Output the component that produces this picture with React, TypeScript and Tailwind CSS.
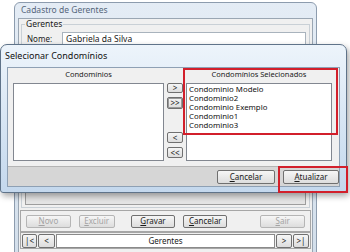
import React from "react";

const Btn = ({
  children,
  className = "",
  disabled = false,
}: {
  children: React.ReactNode;
  className?: string;
  disabled?: boolean;
}) => (
  <div
    className={`flex items-center justify-center rounded-[2px] border bg-gradient-to-b from-[#f6f6f6] to-[#dddddd] text-[8px] leading-none ${
      disabled ? "border-[#b5b5b5] text-[#a3a3a3]" : "border-[#707070] text-[#1a1a1a]"
    } ${className}`}
  >
    {children}
  </div>
);

const Mn = ({ k, rest }: { k: string; rest: string }) => (
  <span>
    <span className="underline underline-offset-1">{k}</span>
    {rest}
  </span>
);

const selecionados = [
  "Condominio Modelo",
  "Condominio2",
  "Condominio Exemplo",
  "Condominio1",
  "Condominio3",
];

export default function App() {
  return (
    <div className="relative h-[252px] w-[350px] overflow-hidden bg-white font-['Noto_Sans',sans-serif]">
      {/* Janela de fundo: Cadastro de Gerentes */}
      <div className="absolute left-[14px] top-[2px] flex h-[252px] w-[303px] flex-col rounded-t-[6px] border border-[#8d9cae] bg-gradient-to-b from-[#e4ecf5] to-[#d3dfeb] px-[3px]">
        <div className="flex h-[15px] items-center pl-[3px] text-[8.5px] text-[#55657a]">
          Cadastro de Gerentes
        </div>
        <div className="flex flex-1 flex-col border border-[#9aa6b3] bg-[#f0f0f0] px-[1px] pb-[3px]">
          <fieldset className="mx-[1px] flex flex-1 flex-col border border-[#c9d0d6] px-[3px] pb-[2px]">
            <legend className="px-[1px] text-[8.5px] leading-[10px] text-[#1a1a1a]">Gerentes</legend>
            <div className="mt-[3px] flex items-center">
              <span className="w-[37px] pl-[2px] text-[8px] text-[#1a1a1a]">Nome:</span>
              <div className="flex h-[14px] flex-1 items-center border border-[#a9b3bd] bg-white pl-[3px] text-[8.5px] text-[#1a1a1a]">
                Gabriela da Silva
              </div>
            </div>
            <div className="flex-1" />
            <div className="h-[13px] border border-[#9d9d9d] bg-[#e4e4e4]" />
          </fieldset>
          <div className="mt-[2px] flex h-[22px] items-center border border-[#a6a6a6] px-[5px]">
            <Btn disabled className="h-[13px] w-[45px]">
              <Mn k="N" rest="ovo" />
            </Btn>
            <Btn disabled className="ml-[8px] h-[13px] w-[36px]">
              <Mn k="E" rest="xcluir" />
            </Btn>
            <Btn className="ml-[16px] h-[13px] w-[45px]">
              <Mn k="G" rest="ravar" />
            </Btn>
            <Btn className="ml-[8px] h-[13px] w-[44px]">
              <Mn k="C" rest="ancelar" />
            </Btn>
            <Btn disabled className="ml-[33px] h-[13px] w-[45px]">
              <Mn k="S" rest="air" />
            </Btn>
          </div>
          <div className="flex h-[17px] items-center gap-[1px] border border-[#a6a6a6] px-[1px]">
            <Btn className="h-[14px] w-[15px]">|&lt;</Btn>
            <Btn className="h-[14px] w-[17px]">&lt;</Btn>
            <div className="flex h-[14px] flex-1 items-center justify-center border border-[#8a8a8a] bg-white text-[8px] text-[#1a1a1a]">
              Gerentes
            </div>
            <Btn className="h-[14px] w-[16px]">&gt;</Btn>
            <Btn className="h-[14px] w-[16px]">&gt;|</Btn>
          </div>
        </div>
      </div>

      {/* Diálogo: Selecionar Condomínios */}
      <div className="absolute left-0 top-[44px] flex h-[149px] w-[347px] flex-col rounded-t-[7px] rounded-b-[3px] border border-[#5f7389] bg-gradient-to-b from-[#edf4fb] via-[#d8e6f4] to-[#c4d8ed] px-[6px] pb-[5px] shadow-[2px_3px_6px_rgba(0,0,0,0.35)]">
        <div className="-ml-[2px] flex h-[22px] items-center text-[9px] text-[#111]">
          Selecionar Condomínios
        </div>
        <div className="flex flex-1 flex-col border border-[#8ea0b4] bg-[#f0f0f0]">
          <div className="flex flex-1 px-[5px] pt-[1px]">
            <div className="flex w-[151px] flex-col">
              <div className="flex h-[12px] items-center justify-center text-[7.5px] text-[#1a1a1a]">
                Condomínios
              </div>
              <div className="mt-[2px] flex-1 border border-[#828790] bg-white" />
            </div>
            <div className="flex w-[22px] flex-col items-center pt-[14px]">
              <Btn className="h-[10px] w-[16px]">&gt;</Btn>
              <Btn className="mt-[4px] h-[12px] w-[16px] border-[#3c3c3c] shadow-[inset_0_0_0_1px_#9a9a9a]">
                &gt;&gt;
              </Btn>
              <Btn className="mt-[23px] h-[11px] w-[16px]">&lt;</Btn>
              <Btn className="mt-[4px] h-[11px] w-[16px]">&lt;&lt;</Btn>
            </div>
            <div className="flex flex-1 flex-col pr-[2px]">
              <div className="flex h-[12px] items-center justify-center text-[7.5px] text-[#1a1a1a]">
                Condomínios Selecionados
              </div>
              <div className="mt-[2px] flex flex-1 flex-col border border-[#828790] bg-white pl-[2px] pt-[1px] text-[7.8px] leading-[9px] text-[#111]">
                {selecionados.map((c) => (
                  <div key={c} className="h-[9px]">
                    {c}
                  </div>
                ))}
              </div>
            </div>
          </div>
          <div className="mt-[5px] flex h-[20px] items-center justify-end gap-[8px] border-t border-[#b4b4b4] bg-[#d6d6d6]">
            <Btn className="h-[14px] w-[58px]">
              <Mn k="C" rest="ancelar" />
            </Btn>
            <Btn className="h-[14px] w-[56px]">
              <Mn k="A" rest="tualizar" />
            </Btn>
          </div>
        </div>
      </div>

      {/* Destaques vermelhos */}
      <div className="pointer-events-none absolute left-[183px] top-[68px] h-[67px] w-[155px] border-2 border-[#d21f2b]" />
      <div className="pointer-events-none absolute left-[278px] top-[166px] h-[27px] w-[70px] border-2 border-[#d21f2b]" />
    </div>
  );
}
